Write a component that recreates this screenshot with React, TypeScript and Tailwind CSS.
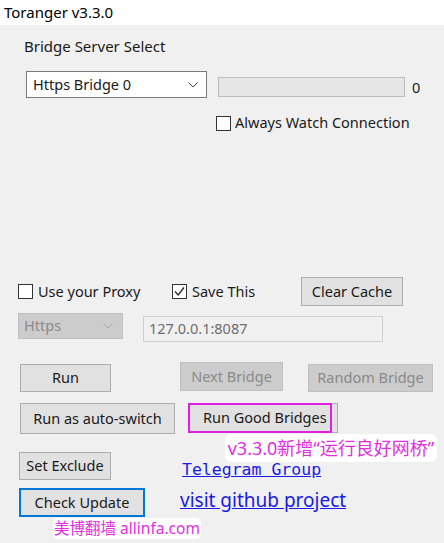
import React from "react";

const ui = { fontFamily: '"Noto Sans", "Open Sans", sans-serif' };
const cjk = { fontFamily: '"Noto Sans", "Noto Sans CJK SC", sans-serif' };
const mono = { fontFamily: '"DejaVu Sans Mono", "Liberation Mono", monospace' };

function Chevron({ color = "#444" }: { color?: string }) {
  return (
    <svg width="12" height="8" viewBox="0 0 12 8">
      <polyline points="1.5,1.5 6,6 10.5,1.5" fill="none" stroke={color} strokeWidth="1" />
    </svg>
  );
}

function Check({ checked = false }: { checked?: boolean }) {
  return (
    <span className="w-[15px] h-[15px] border border-[#333] bg-white flex items-center justify-center shrink-0">
      {checked && (
        <svg width="13" height="13" viewBox="0 0 13 13">
          <polyline points="2,6.5 5.2,10 11,2.5" fill="none" stroke="#222" strokeWidth="1.3" />
        </svg>
      )}
    </span>
  );
}

function Btn({ children, className = "", disabled = false }: { children: React.ReactNode; className?: string; disabled?: boolean }) {
  return (
    <div
      className={
        "flex items-center justify-center whitespace-nowrap text-[14.5px] border " +
        (disabled ? "bg-[#cccccc] border-[#bfbfbf] text-[#8a8a8a] " : "bg-[#e1e1e1] border-[#adadad] text-[#1a1a1a] ") +
        className
      }
    >
      {children}
    </div>
  );
}

export default function App() {
  return (
    <div className="w-[444px] h-[543px] bg-[#f0f0f0] relative overflow-hidden text-[#1a1a1a]" style={ui}>
      <div className="h-[25px] bg-white pl-[4px] flex items-center text-[15px] text-black">Toranger v3.3.0</div>

      <div className="ml-[24px] mt-[11px] h-[20px] text-[15px] leading-[20px]">Bridge Server Select</div>

      <div className="flex items-start mt-[15px]">
        <div className="ml-[26px] w-[181px] h-[27px] bg-white border border-[#7a7a7a] flex items-center justify-between pl-[6px] pr-[7px] text-[14.5px]">
          <span>Https Bridge 0</span>
          <Chevron />
        </div>
        <div className="ml-[11px] mt-[6px] w-[187px] h-[20px] bg-[#e6e6e6] border border-[#bcbcbc]" />
        <span className="ml-[7px] mt-[6px] text-[14.5px] leading-[20px]">0</span>
      </div>

      <div className="flex items-center mt-[17px] ml-[216px] h-[16px]">
        <Check />
        <span className="ml-[4px] text-[14.5px]">Always Watch Connection</span>
      </div>

      <div className="flex items-center mt-[146px] h-[29px]">
        <div className="ml-[18px] w-[154px] flex items-center">
          <Check />
          <span className="ml-[5px] text-[14.5px]">Use your Proxy</span>
        </div>
        <div className="w-[129px] flex items-center">
          <Check checked />
          <span className="ml-[5px] text-[14.5px]">Save This</span>
        </div>
        <Btn className="w-[102px] h-[29px]">Clear Cache</Btn>
      </div>

      <div className="flex items-start mt-[7px]">
        <div className="ml-[18px] w-[105px] h-[26px] bg-[#cccccc] border border-[#bfbfbf] flex items-center justify-between pl-[5px] pr-[8px] text-[14.5px] text-[#8a8a8a]">
          <span>Https</span>
          <Chevron color="#a8a8a8" />
        </div>
        <div className="ml-[20px] mt-[3px] w-[240px] h-[26px] bg-[#f0f0f0] border border-[#cfcfcf] flex items-center pl-[5px] text-[14.5px] text-[#6d6d6d]">
          127.0.0.1:8087
        </div>
      </div>

      <div className="flex items-start mt-[20px]">
        <Btn className="ml-[20px] mt-[2px] w-[91px] h-[28px]">Run</Btn>
        <Btn disabled className="ml-[69px] w-[103px] h-[29px]">Next Bridge</Btn>
        <Btn disabled className="ml-[25px] mt-[2px] w-[125px] h-[28px]">Random Bridge</Btn>
      </div>

      <div className="flex items-start mt-[11px]">
        <Btn className="ml-[20px] w-[155px] h-[31px]">Run as auto-switch</Btn>
        <div className="ml-[13px] relative w-[150px] h-[30px]">
          <Btn className="w-[150px] h-[30px] justify-start pl-[14px]">Run Good Bridges</Btn>
          <div className="absolute left-0 top-0 w-[144px] h-[30px] border-2 border-[#e020e0]" />
        </div>
      </div>

      <div className="flex items-start mt-[18px]">
        <Btn className="ml-[19px] w-[92px] h-[28px]">Set Exclude</Btn>
        <a className="ml-[71px] mt-[8px] text-[16.5px] leading-[20px] text-[#1a1ae6] underline whitespace-nowrap" style={mono}>Telegram Group</a>
      </div>

      <div className="flex items-start mt-[8px]">
        <div className="ml-[19px] w-[126px] h-[29px] bg-[#e1e1e1] border-2 border-[#0078d7] flex items-center justify-center text-[14.5px] whitespace-nowrap">
          Check Update
        </div>
        <a className="ml-[35px] mt-[0px] text-[19px] leading-[24px] text-[#1a1ae6] underline whitespace-nowrap">visit github project</a>
      </div>

      <div
        className="absolute left-[225px] top-[434px] w-[212px] h-[28px] bg-white rounded-[6px] flex items-center justify-center whitespace-nowrap text-[18px] text-[#e22ee2]"
        style={cjk}
      >
        v3.3.0新增“运行良好网桥”
      </div>

      <div
        className="absolute left-[53px] top-[518px] w-[148px] h-[21px] bg-white rounded-[5px] flex items-center justify-center whitespace-nowrap text-[15.5px] text-[#e22ee2]"
        style={cjk}
      >
        美博翻墙 allinfa.com
      </div>
    </div>
  );
}
